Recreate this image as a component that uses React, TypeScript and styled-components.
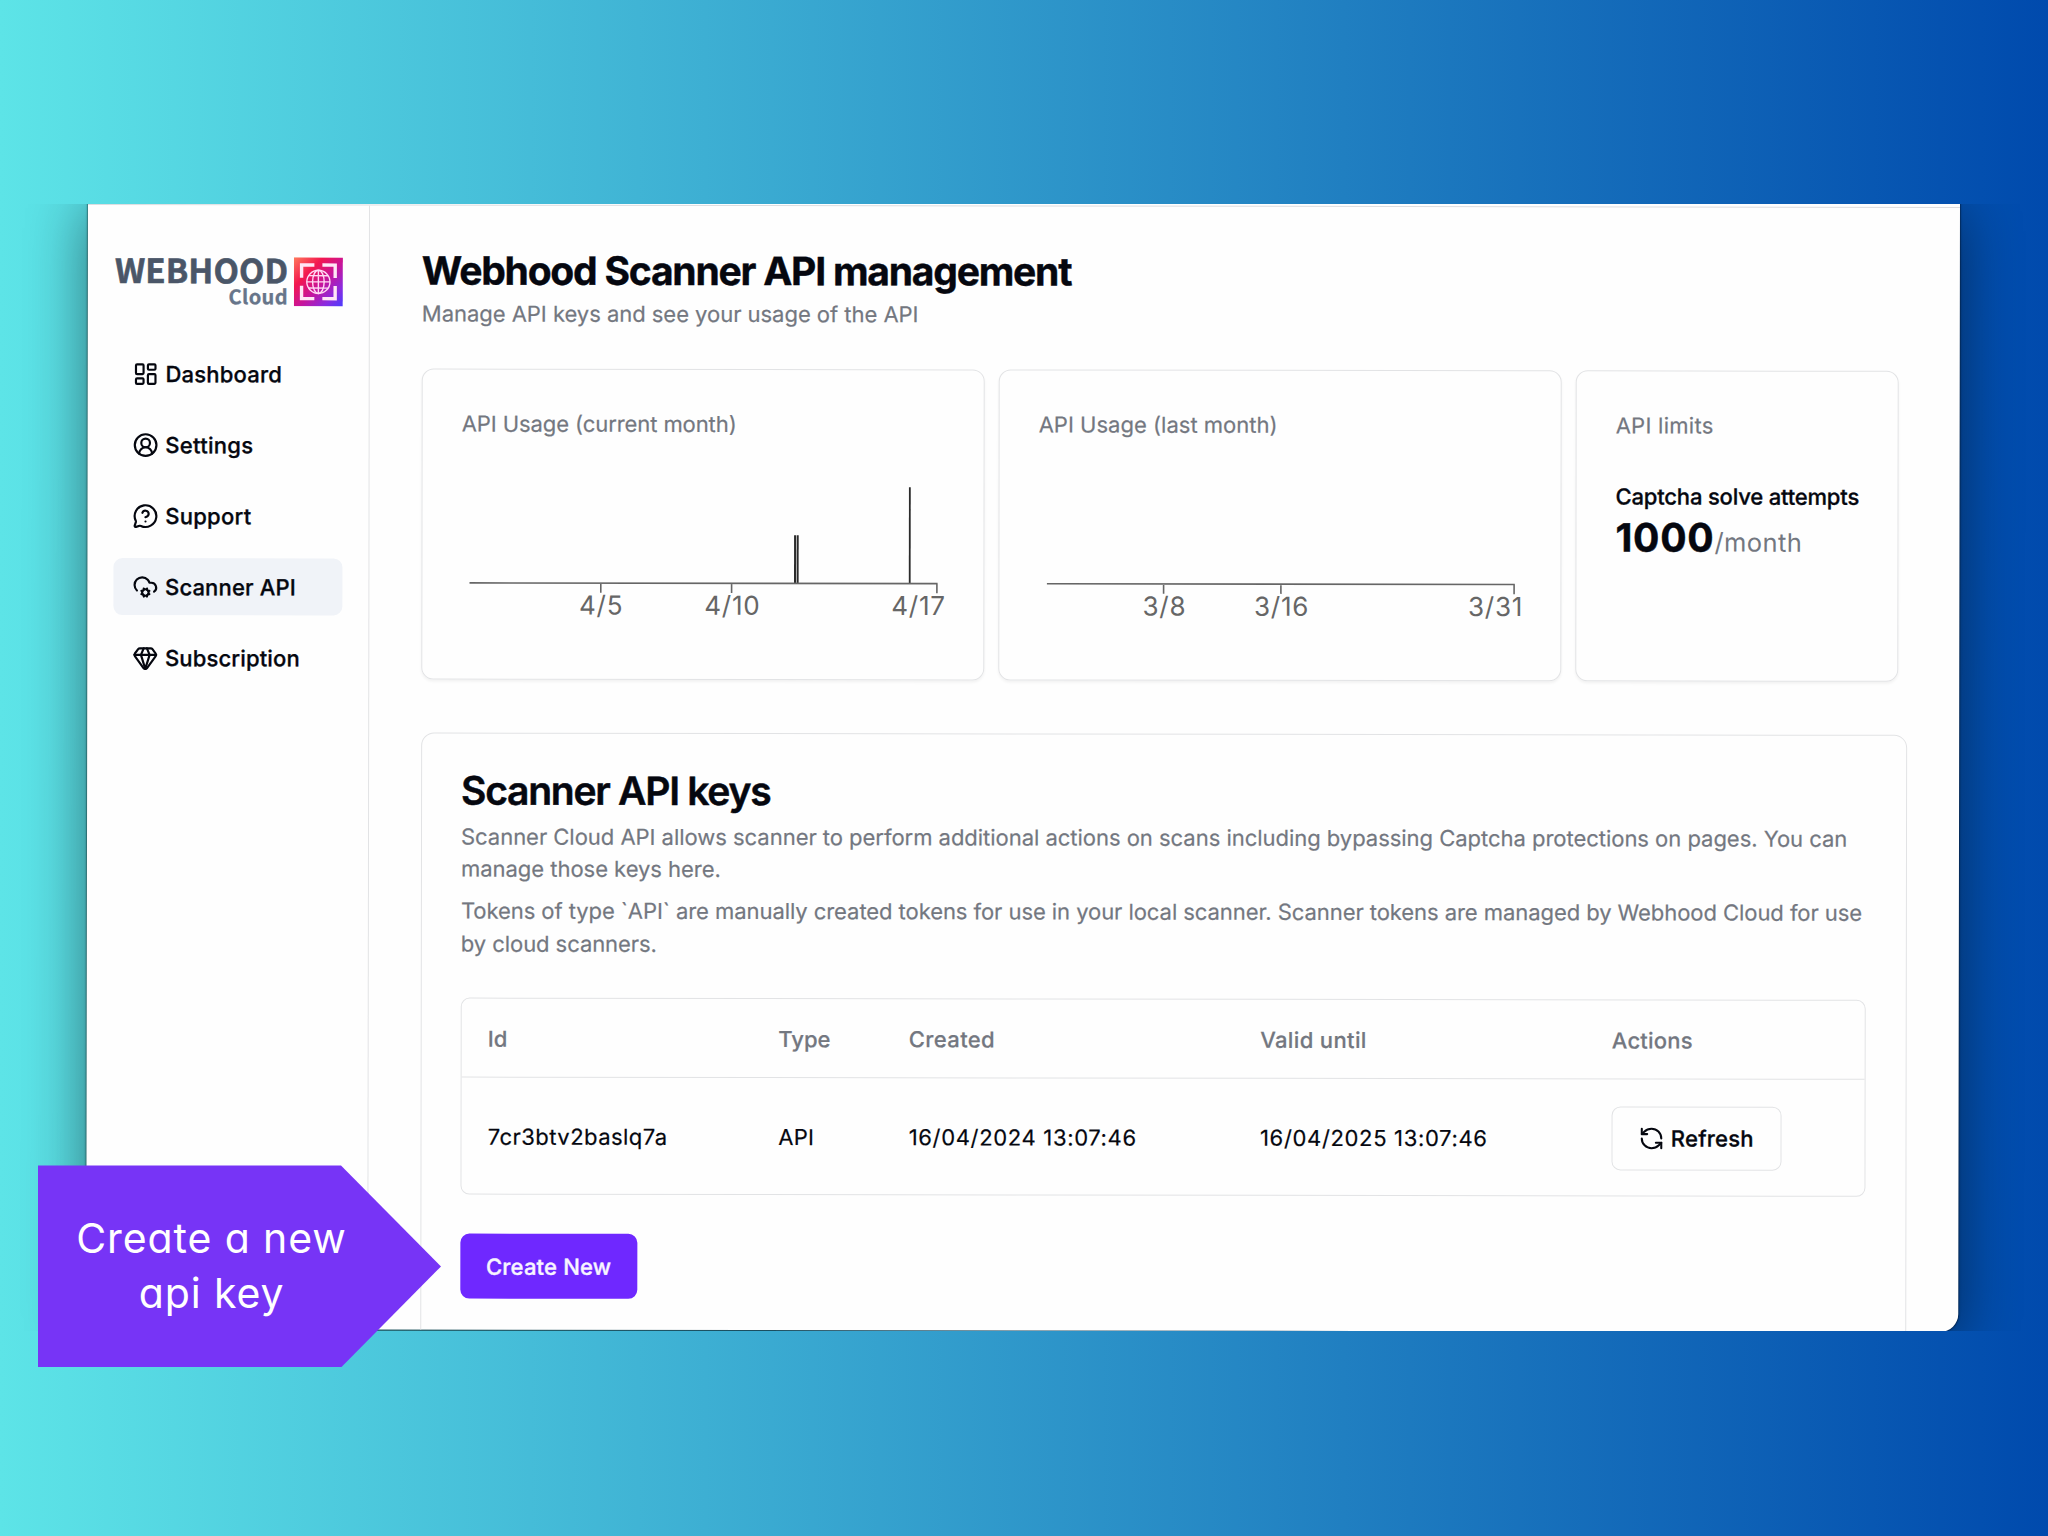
import React from "react";
import styled, { createGlobalStyle } from "styled-components";
import {
  LayoutDashboard,
  CircleUserRound,
  MessageCircleQuestion,
  CloudCog,
  Gem,
  RefreshCcw,
} from "lucide-react";

const ink = "#05070f";
const muted = "#737780";
const line = "#e2e3e5";

const Global = createGlobalStyle`
  * { box-sizing: border-box; }
  body { margin: 0; font-family: Inter, "Liberation Sans", sans-serif; color: ${ink}; }
  h1, h2, p { margin: 0; }
`;

const Stage = styled.div`
  position: relative;
  width: 2048px;
  height: 1536px;
  overflow: hidden;
  padding-top: 204px;
  background: linear-gradient(90deg, #5de4e7 0%, #004aad 100%);
`;

const Strip = styled.div`
  height: 1127px;
  overflow: hidden;
  padding-left: 88px;
`;

const Window = styled.div`
  width: 1871.8px;
  height: 1134.8px;
  margin-top: -10px;
  padding-top: 10px;
  overflow: hidden;
  background: #fefefe;
  border-radius: 0 0 18px 18px;
  transform: rotate(0.09deg);
  transform-origin: 0 10px;
  box-shadow: 0 0 1.5px 1px rgba(0, 0, 0, 0.4), 0 14px 60px rgba(0, 0, 0, 0.48);
`;

const Body = styled.div`
  display: flex;
  height: 100%;
  border-top: 1.5px solid #dcdde0;
`;

const Sidebar = styled.aside`
  width: 282px;
  flex: none;
  border-right: 1.6px solid ${line};
  padding: 52.2px 25.9px 0 25.9px;
`;

const Logo = styled.div`
  display: flex;
  align-items: flex-start;
  gap: 5.6px;
  height: 50px;
  padding-left: 1.8px;
`;

const LogoWords = styled.div`
  display: flex;
  flex-direction: column;
  align-items: flex-end;
  width: 172.5px;
  font-family: "Noto Sans CJK JP", "Noto Sans", sans-serif;
  font-weight: 700;
`;

const LogoName = styled.span`
  font-size: 33px;
  line-height: 24.6px;
  letter-spacing: 0.1px;
  color: #4a5668;
  -webkit-text-stroke: 0.6px #4a5668;
`;

const LogoTag = styled.span`
  margin-top: 4.2px;
  font-size: 20px;
  line-height: 20px;
  letter-spacing: 0.4px;
  color: #67758a;
  -webkit-text-stroke: 0.3px #67758a;
`;

const Nav = styled.nav`
  display: flex;
  flex-direction: column;
  gap: 13.6px;
  margin-top: 37.8px;
`;

const NavItem = styled.a<{ $active?: boolean; $track: number }>`
  display: flex;
  align-items: center;
  gap: 6.6px;
  width: 228.7px;
  height: 57.4px;
  padding: 1.6px 0 0 19.2px;
  border-radius: 9px;
  background: ${(p) => (p.$active ? "#f0f3f8" : "transparent")};
  font-size: 22px;
  font-weight: 500;
  -webkit-text-stroke: 0.3px ${ink};
  letter-spacing: ${(p) => p.$track}px;

  svg {
    flex: none;
  }
`;

const Main = styled.main`
  flex: none;
  width: 1538px;
  padding: 41px 0 0 52px;
`;

const Title = styled.h1`
  font-size: 39px;
  line-height: 48px;
  font-weight: 700;
  letter-spacing: -1.21px;
  -webkit-text-stroke: 0.4px ${ink};
`;

const Subtitle = styled.p`
  margin-top: 2.7px;
  font-size: 22px;
  line-height: 32px;
  color: ${muted};
  letter-spacing: -0.03px;
  -webkit-text-stroke: 0.2px ${muted};
`;

const Cards = styled.div`
  display: grid;
  grid-template-columns: 563px 563px 323px;
  column-gap: 14px;
  margin-top: 39.1px;
`;

const Card = styled.section`
  height: 311px;
  padding: 38.4px 37px 0 39px;
  border: 1.5px solid ${line};
  border-radius: 12px;
  box-shadow: 0 2px 3px rgba(0, 0, 0, 0.05);
`;

const CardLabel = styled.p<{ $track?: number }>`
  font-size: 22px;
  line-height: 32px;
  color: ${muted};
  white-space: nowrap;
  letter-spacing: ${(p) => p.$track ?? 0}px;
  -webkit-text-stroke: 0.2px ${muted};
`;

const ChartSvg = styled.svg`
  display: block;
  overflow: visible;

  text {
    font-size: 26px;
    fill: #666;
    text-anchor: middle;
    letter-spacing: 0.8px;
  }
`;

const LimitName = styled.p`
  margin-top: 39.2px;
  font-size: 22px;
  line-height: 32px;
  font-weight: 500;
  letter-spacing: -0.18px;
  white-space: nowrap;
  -webkit-text-stroke: 0.3px ${ink};
`;

const LimitValue = styled.p`
  display: flex;
  align-items: baseline;
  line-height: 48px;
  margin-top: 0.6px;
`;

const LimitNumber = styled.span`
  font-size: 39px;
  font-weight: 700;
  letter-spacing: 0.8px;
  -webkit-text-stroke: 0.5px ${ink};
`;

const LimitUnit = styled.span`
  font-size: 25.5px;
  letter-spacing: 0.45px;
  color: ${muted};
`;

const Panel = styled.section`
  width: 1486px;
  height: 700px;
  margin-top: 53px;
  padding: 37.3px 39px;
  border: 1.5px solid ${line};
  border-radius: 13px;
`;

const PanelTitle = styled.h2`
  font-size: 39px;
  line-height: 39px;
  font-weight: 600;
  letter-spacing: -1.24px;
  -webkit-text-stroke: 0.5px ${ink};
`;

const Paragraph = styled.p<{ $track: number; $gap: number }>`
  margin-top: ${(p) => p.$gap}px;
  font-size: 22px;
  line-height: 32.4px;
  color: ${muted};
  white-space: nowrap;
  letter-spacing: ${(p) => p.$track}px;
  -webkit-text-stroke: 0.2px ${muted};
`;

const Table = styled.div`
  width: 1405px;
  margin-top: 38.4px;
  border: 1.5px solid ${line};
  border-radius: 9px;
`;

const TableRow = styled.div<{ $head?: boolean }>`
  display: grid;
  grid-template-columns: 290.5px 130.5px 351.3px 351.6px 1fr;
  align-items: center;
  height: ${(p) => (p.$head ? 78.5 : 116.5)}px;
  border-bottom: ${(p) => (p.$head ? `1.5px solid ${line}` : "none")};
  font-size: 22px;
  font-weight: ${(p) => (p.$head ? 500 : 400)};
  color: ${(p) => (p.$head ? muted : ink)};
  -webkit-text-stroke: 0.2px ${(p) => (p.$head ? muted : ink)};
`;

const Cell = styled.div<{ $track?: number }>`
  padding: 0.6px 0 0 26.2px;
  letter-spacing: ${(p) => p.$track ?? 0}px;
`;

const OutlineButton = styled.button`
  display: flex;
  align-items: center;
  gap: 6px;
  width: 170px;
  height: 64px;
  padding: 0.6px 0 0 26.2px;
  border: 1.5px solid ${line};
  border-radius: 9px;
  background: #fefefe;
  color: ${ink};
  font: 500 22px Inter, sans-serif;
  letter-spacing: 0.25px;
  -webkit-text-stroke: 0.3px ${ink};
`;

const PrimaryButton = styled.button`
  display: block;
  width: 177px;
  height: 64.5px;
  margin: 38.8px 0 0 -0.2px;
  padding: 0.6px 0 0;
  border: 0;
  border-radius: 9px;
  background: #6f28ff;
  color: #f8f5ff;
  font: 500 22px Inter, sans-serif;
  letter-spacing: 0.2px;
  -webkit-text-stroke: 0.35px #f8f5ff;
`;

const Callout = styled.div`
  position: absolute;
  left: 38px;
  top: 1165.4px;
  width: 403px;
  height: 202px;
  padding: 45.2px 56px 0 0;
  background: #7734f6;
  clip-path: polygon(0 0, 303px 0, 100% 50%, 303px 100%, 0 100%);
  color: #fff;
  font-size: 41px;
  line-height: 55px;
  font-weight: 380;
  letter-spacing: 0.9px;
  text-align: center;
  font-feature-settings: "cv11";
`;

type Point = { x: number; top: number; w: number };
type Tick = { x: number; label: string; at: number };

function UsageChart({ from, to, bars, ticks }: { from: number; to: number; bars: Point[]; ticks: Tick[] }) {
  return (
    <ChartSvg width={484} height={180} viewBox="0 0 484 180">
      {bars.map((b) => (
        <rect key={b.x} x={b.x} y={b.top} width={b.w} height={143.3 - b.top} fill="#2b2b2b" />
      ))}
      <path
        d={`M${from} 143.3H${to}` + ticks.map((t) => `M${t.x} 143.3V153`).join("")}
        stroke="#666"
        strokeWidth={1.6}
        fill="none"
      />
      {ticks.map((t) => (
        <text key={t.label} x={t.at} y={174.8}>
          {t.label}
        </text>
      ))}
    </ChartSvg>
  );
}

function LogoMark() {
  return (
    <svg width="49" height="49" viewBox="0 0 49 49" fill="none">
      <defs>
        <linearGradient id="mark" x1="0" y1="0" x2="49" y2="49" gradientUnits="userSpaceOnUse">
          <stop offset="0" stopColor="#ff7a5c" />
          <stop offset="0.3" stopColor="#f3174f" />
          <stop offset="0.55" stopColor="#c8149a" />
          <stop offset="0.8" stopColor="#8a2be0" />
          <stop offset="1" stopColor="#4a3dff" />
        </linearGradient>
      </defs>
      <rect width="49" height="49" fill="url(#mark)" />
      <path
        d="M7.7 20.5V7.7H20.5M28.5 7.7H41.3V20.5M41.3 28.5V41.3H28.5M20.5 41.3H7.7V28.5"
        stroke="#ffe6f6"
        strokeWidth="3.4"
      />
      <g stroke="#ffd9f4" strokeWidth="1.4">
        <circle cx="24.5" cy="24.5" r="11.6" />
        <ellipse cx="24.5" cy="24.5" rx="5.8" ry="11.6" />
        <path d="M24.5 12.9V36.1M12.9 24.5H36.1M14.8 18.3H34.2M14.8 30.7H34.2" />
      </g>
    </svg>
  );
}

const nav = [
  { label: "Dashboard", icon: LayoutDashboard, track: 0.22 },
  { label: "Settings", icon: CircleUserRound, track: 0.3 },
  { label: "Support", icon: MessageCircleQuestion, track: 0.3 },
  { label: "Scanner API", icon: CloudCog, track: 0.15, active: true },
  { label: "Subscription", icon: Gem, track: 0.15 },
];

export default function App() {
  return (
    <>
      <Global />
      <Stage>
        <Strip>
          <Window>
            <Body>
              <Sidebar>
                <Logo>
                  <LogoWords>
                    <LogoName>WEBHOOD</LogoName>
                    <LogoTag>Cloud</LogoTag>
                  </LogoWords>
                  <LogoMark />
                </Logo>
                <Nav>
                  {nav.map(({ label, icon: Icon, track, active }) => (
                    <NavItem key={label} $active={active} $track={track}>
                      <Icon size={26} strokeWidth={2} />
                      {label}
                    </NavItem>
                  ))}
                </Nav>
              </Sidebar>
              <Main>
                <Title>Webhood Scanner API management</Title>
                <Subtitle>Manage API keys and see your usage of the API</Subtitle>
                <Cards>
                  <Card>
                    <CardLabel $track={-0.08}>API Usage (current month)</CardLabel>
                    <UsageChart
                      from={8.1}
                      to={476.2}
                      bars={[
                        { x: 332.6, top: 95.1, w: 2 },
                        { x: 335.2, top: 95.1, w: 2 },
                        { x: 447.4, top: 46.9, w: 1.8 },
                      ]}
                      ticks={[
                        { x: 139.4, label: "4/5", at: 139.8 },
                        { x: 270.2, label: "4/10", at: 271 },
                        { x: 475.5, label: "4/17", at: 457.2 },
                      ]}
                    />
                  </Card>
                  <Card>
                    <CardLabel $track={0.02}>API Usage (last month)</CardLabel>
                    <UsageChart
                      from={8.5}
                      to={476.4}
                      bars={[]}
                      ticks={[
                        { x: 125.2, label: "3/8", at: 126 },
                        { x: 242.5, label: "3/16", at: 243.2 },
                        { x: 475.7, label: "3/31", at: 457.2 },
                      ]}
                    />
                  </Card>
                  <Card>
                    <CardLabel $track={0.27}>API limits</CardLabel>
                    <LimitName>Captcha solve attempts</LimitName>
                    <LimitValue>
                      <LimitNumber>1000</LimitNumber>
                      <LimitUnit>/month</LimitUnit>
                    </LimitValue>
                  </Card>
                </Cards>
                <Panel>
                  <PanelTitle>Scanner API keys</PanelTitle>
                  <Paragraph $track={-0.028} $gap={10.9}>
                    Scanner Cloud API allows scanner to perform additional actions on scans including bypassing Captcha
                    protections on pages. You can
                    <br />
                    manage those keys here.
                  </Paragraph>
                  <Paragraph $track={-0.062} $gap={9.5}>
                    Tokens of type `API` are manually created tokens for use in your local scanner. Scanner tokens are
                    managed by Webhood Cloud for use
                    <br />
                    by cloud scanners.
                  </Paragraph>
                  <Table>
                    <TableRow $head>
                      <Cell>Id</Cell>
                      <Cell>Type</Cell>
                      <Cell $track={0.36}>Created</Cell>
                      <Cell $track={0.37}>Valid until</Cell>
                      <Cell $track={0.2}>Actions</Cell>
                    </TableRow>
                    <TableRow>
                      <Cell $track={0.46}>7cr3btv2baslq7a</Cell>
                      <Cell $track={0.3}>API</Cell>
                      <Cell $track={0.66}>16/04/2024 13:07:46</Cell>
                      <Cell $track={0.66}>16/04/2025 13:07:46</Cell>
                      <Cell>
                        <OutlineButton>
                          <RefreshCcw size={26} strokeWidth={1.9} />
                          Refresh
                        </OutlineButton>
                      </Cell>
                    </TableRow>
                  </Table>
                  <PrimaryButton>Create New</PrimaryButton>
                </Panel>
              </Main>
            </Body>
          </Window>
        </Strip>
        <Callout>
          Create a new
          <br />
          api key
        </Callout>
      </Stage>
    </>
  );
}
